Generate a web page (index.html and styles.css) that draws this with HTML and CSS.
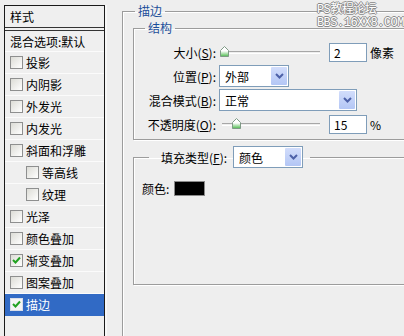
FILE: index.html
```html
<!DOCTYPE html>
<html lang="zh-CN">
<head>
    <meta charset="UTF-8">
    <title>图层样式 - 描边</title>
    <link rel="stylesheet" href="styles.css">
</head>
<body>
    <!-- Style list on the left -->
    <div class="styles-panel">
        <div class="panel-title">样式</div>
        <div class="item blend">混合选项:默认</div>
        <div class="item"><span class="cb"></span>投影</div>
        <div class="item"><span class="cb"></span>内阴影</div>
        <div class="item"><span class="cb"></span>外发光</div>
        <div class="item"><span class="cb"></span>内发光</div>
        <div class="item"><span class="cb"></span>斜面和浮雕</div>
        <div class="item sub"><span class="cb"></span>等高线</div>
        <div class="item sub"><span class="cb"></span>纹理</div>
        <div class="item"><span class="cb"></span>光泽</div>
        <div class="item"><span class="cb"></span>颜色叠加</div>
        <div class="item"><span class="cb checked"><svg viewBox="0 0 11 11" width="11" height="11"><path d="M2 5 L4.5 7.5 L9 2.5" fill="none" stroke="#21a121" stroke-width="2"/></svg></span>渐变叠加</div>
        <div class="item"><span class="cb"></span>图案叠加</div>
        <div class="item selected"><span class="cb checked"><svg viewBox="0 0 11 11" width="11" height="11"><path d="M2 5 L4.5 7.5 L9 2.5" fill="none" stroke="#21a121" stroke-width="2"/></svg></span>描边</div>
    </div>

    <!-- Stroke settings -->
    <fieldset class="group outer">
        <legend class="title">描边</legend>

        <fieldset class="group structure">
            <legend class="title">结构</legend>
            <div class="rows">
                <label>大小(<u>S</u>):</label>
                <div class="control">
                    <div class="slider">
                        <div class="track"></div>
                        <svg class="thumb" style="left: 1px" viewBox="0 0 9 11" width="9" height="11">
                            <defs>
                                <linearGradient id="tg1" x1="0" y1="0" x2="0" y2="1">
                                    <stop offset="0.45" stop-color="#ffffff"/>
                                    <stop offset="1" stop-color="#4cbb4c"/>
                                </linearGradient>
                            </defs>
                            <path d="M0.5 4.5 L4.5 0.5 L8.5 4.5 L8.5 10.5 L0.5 10.5 Z" fill="url(#tg1)" stroke="#7f9a86"/>
                        </svg>
                    </div>
                    <div class="num">2</div>
                    <span class="unit">像素</span>
                </div>

                <label>位置(<u>P</u>):</label>
                <div class="control">
                    <div class="select short">
                        <span>外部</span>
                        <span class="arrow"><svg viewBox="0 0 9 6" width="9" height="6"><path d="M1 1 L4.5 4.5 L8 1" fill="none" stroke="#4d61a8" stroke-width="2"/></svg></span>
                    </div>
                </div>

                <label>混合模式(<u>B</u>):</label>
                <div class="control">
                    <div class="select long">
                        <span>正常</span>
                        <span class="arrow"><svg viewBox="0 0 9 6" width="9" height="6"><path d="M1 1 L4.5 4.5 L8 1" fill="none" stroke="#4d61a8" stroke-width="2"/></svg></span>
                    </div>
                </div>

                <label>不透明度(<u>O</u>):</label>
                <div class="control">
                    <div class="slider">
                        <div class="track"></div>
                        <svg class="thumb" style="left: 13px" viewBox="0 0 9 11" width="9" height="11">
                            <defs>
                                <linearGradient id="tg2" x1="0" y1="0" x2="0" y2="1">
                                    <stop offset="0.45" stop-color="#ffffff"/>
                                    <stop offset="1" stop-color="#4cbb4c"/>
                                </linearGradient>
                            </defs>
                            <path d="M0.5 4.5 L4.5 0.5 L8.5 4.5 L8.5 10.5 L0.5 10.5 Z" fill="url(#tg2)" stroke="#7f9a86"/>
                        </svg>
                    </div>
                    <div class="num">15</div>
                    <span class="unit">%</span>
                </div>
            </div>
        </fieldset>

        <fieldset class="group fill">
            <legend class="fill-legend">
                <label>填充类型(<u>F</u>):</label>
                <div class="select short">
                    <span>颜色</span>
                    <span class="arrow"><svg viewBox="0 0 9 6" width="9" height="6"><path d="M1 1 L4.5 4.5 L8 1" fill="none" stroke="#4d61a8" stroke-width="2"/></svg></span>
                </div>
            </legend>
            <div class="color-row">
                <label>颜色:</label>
                <div class="swatch"></div>
            </div>
        </fieldset>
    </fieldset>

    <!-- Forum watermark -->
    <div class="watermark">
        <div>PS教程论坛</div>
        <div>BBS.16XX8.COM</div>
    </div>
</body>
</html>
```

FILE: styles.css
```css
html {
    overflow: hidden;
}

body {
    margin: 0;
    height: 336px;
    overflow: hidden;
    display: flex;
    align-items: flex-start;
    background-color: #eeeeee;
    font-family: "Noto Sans CJK SC", "DejaVu Sans", sans-serif;
    font-size: 12px;
    color: #000;
}

/* left list */
.styles-panel {
    width: 99px;
    height: 340px;
    margin: 5px 0 0 4px;
    border: 1px solid #1a1a1a;
    border-bottom: none;
    background-color: #efefef;
    box-shadow: 2px 0 0 #f8f8f8;
}

.panel-title {
    height: 21px;
    line-height: 21px;
    padding-left: 5px;
    border-bottom: 4px double #333;
}

.item {
    height: 21px;
    display: flex;
    align-items: center;
    padding-left: 5px;
    border-bottom: 1px solid #fbfbfb;
    white-space: nowrap;
}

.item.blend {
    height: 20px;
}

.item.sub {
    padding-left: 21px;
}

.item.selected {
    background-color: #316ac5;
    color: #fff;
    border-bottom-color: #316ac5;
}

.cb {
    width: 11px;
    height: 11px;
    margin-right: 3px;
    border: 1px solid #8e8f8f;
    background: linear-gradient(135deg, #dcdcd6, #ffffff);
    display: flex;
    align-items: center;
    justify-content: center;
}

.item.selected .cb {
    border-color: #d8dde8;
    background: #f4f4f4;
}

/* group boxes */
.group {
    margin: 0;
    padding: 0;
    min-inline-size: 0;
    border: 1px solid #9c9c9c;
    box-shadow: inset 1px 1px 0 #fff, 1px 1px 0 #fff;
}

.title {
    padding: 0 3px;
    line-height: 16px;
    color: #1d4f9a;
}

.outer {
    flex: 1;
    margin: 3px -40px 0 17px;
    padding: 1px 0 100px 10px;
}

.outer > .title {
    margin-left: 2px;
}

.structure {
    padding: 4px 0 3px 0;
}

.structure > .title {
    margin-left: 11px;
}

.rows {
    display: grid;
    grid-template-columns: 82px auto;
    grid-auto-rows: 24px;
    column-gap: 3px;
    align-items: center;
}

.rows label {
    text-align: right;
    white-space: nowrap;
}

.control {
    display: flex;
    align-items: center;
}

.slider {
    position: relative;
    width: 101px;
    height: 12px;
    margin-right: 9px;
}

.track {
    margin: 5px 0 0 3px;
    height: 1px;
    border-top: 1px solid #a7a7a7;
    border-bottom: 1px solid #fff;
}

.thumb {
    position: absolute;
    top: 0;
}

.num {
    width: 32px;
    height: 17px;
    line-height: 17px;
    padding-left: 4px;
    border: 1px solid #7f9db9;
    background-color: #fff;
}

.unit {
    margin-left: 3px;
}

.select {
    height: 20px;
    display: flex;
    align-items: center;
    justify-content: space-between;
    padding: 0 1px 0 5px;
    border: 1px solid #7f9db9;
    background-color: #fff;
    box-sizing: border-box;
}

.select.short {
    width: 70px;
    height: 22px;
}

.select.long {
    width: 138px;
    height: 22px;
}

.arrow {
    width: 16px;
    height: 18px;
    display: flex;
    align-items: center;
    justify-content: center;
    border-radius: 1px;
    background: linear-gradient(#d2ddfb, #b3c6f5);
}

.fill {
    margin-top: 6px;
    padding: 0 0 88px 8px;
}

.fill-legend {
    margin-left: 7px;
    padding: 0 7px 0 12px;
    height: 22px;
    display: flex;
    align-items: center;
}

.fill-legend label {
    margin-right: 6px;
}

.color-row {
    margin-top: 12px;
    display: flex;
    align-items: center;
    height: 16px;
}

.color-row label {
    margin-right: 5px;
}

.swatch {
    width: 29px;
    height: 13px;
    border: 1px solid #8a8a8a;
    background-color: #000;
}

.watermark {
    position: absolute;
    top: 4px;
    right: 0;
    font-family: "Liberation Mono", "Noto Sans CJK SC", monospace;
    font-size: 12px;
    letter-spacing: -0.5px;
    color: #fff;
    text-shadow: 1px 0 #8a8a8a, -1px 0 #8a8a8a, 0 1px #8a8a8a, 0 -1px #8a8a8a;
}

.watermark div {
    height: 13px;
    line-height: 13px;
}
```
